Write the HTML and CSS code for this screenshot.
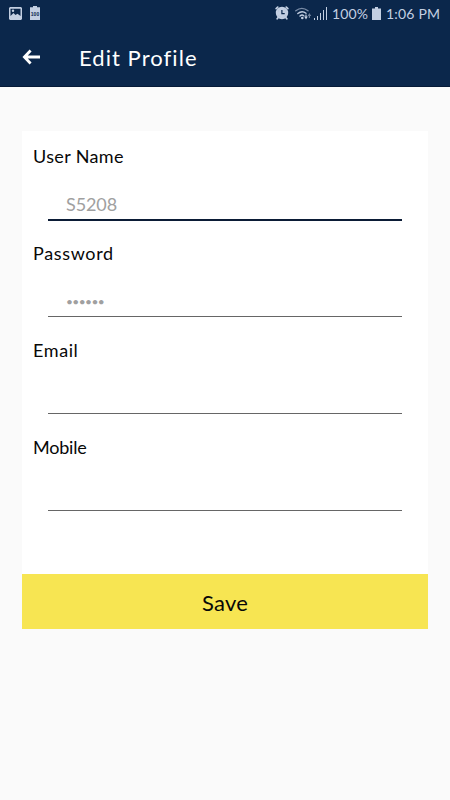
FILE: index.html
```html
<!DOCTYPE html>
<html lang="en">
<head>
  <meta charset="utf-8">
  <meta name="viewport" content="width=device-width, initial-scale=1">
  <title>Edit Profile</title>
  <link rel="stylesheet" href="styles.css">
</head>
<body>
  <header>
    <div class="status-bar">
      <div class="status-left">
        <svg width="13" height="13" viewBox="0 0 13 13">
          <path fill="#c3cfe2" fill-rule="evenodd" d="M1 0h11l1 1v11l-1 1H1l-1-1V1zM1.5 1.7V9l3-3 2 2 2-1.3 3 2.3V1.7z"/>
          <circle cx="4" cy="3.7" r="1.2" fill="#c3cfe2"/>
        </svg>
        <svg width="10" height="14" viewBox="0 0 10 14">
          <path fill="#c3cfe2" d="M3 0h4v1.3h3V14H0V1.3h3z"/>
          <text class="battery-level" x="5" y="9.8" text-anchor="middle" textLength="8.4" lengthAdjust="spacingAndGlyphs">100</text>
        </svg>
      </div>
      <div class="status-right">
        <svg width="14" height="14" viewBox="0 0 14 14">
          <circle cx="7" cy="7" r="5" fill="none" stroke="#c3cfe2" stroke-width="2.4"/>
          <circle cx="7" cy="7" r="4.4" fill="#c3cfe2"/>
          <path fill="none" stroke="#c3cfe2" stroke-width="1.8" stroke-linecap="round" d="M1.2 2.6l1.5-1.4M12.8 2.6l-1.5-1.4M3 11.8l-.8 1M11 11.8l.8 1"/>
          <path fill="none" stroke="#0b274b" stroke-width="1.2" d="M6.9 4v3.6h2.8"/>
        </svg>
        <svg class="wifi" width="17" height="13" viewBox="0 0 17 13">
          <g fill="none" stroke="#c3cfe2" stroke-width="1.4" stroke-linecap="round">
            <path opacity=".6" d="M.8 3.8Q6.8-1 13 3.8"/>
            <path d="M2.8 6.5Q7 3 11 6.2M5 9Q7 7.3 8.8 8.7"/>
          </g>
          <circle cx="7.3" cy="11" r="1.3" fill="#c3cfe2"/>
          <path fill="#c3cfe2" d="M9.2 9.5h1.2V7.5h1.2v2h1.2L11 12.5z"/>
          <path fill="#71839f" d="M12.6 9l1.8-3 1.8 3h-1.2v2h-1.2V9z"/>
        </svg>
        <svg class="signal" width="13" height="13" viewBox="0 0 13 13">
          <path fill="#c3cfe2" d="M0 11h1v2H0zM3 9h1v4H3zM6 6h1v7H6zM9 3h1v10H9zM12 0h1v13h-1z"/>
        </svg>
        <span class="percent">100%</span>
        <svg class="battery" width="9" height="13" viewBox="0 0 9 13">
          <path fill="#c3cfe2" d="M3 0h3v1.5h3V13H0V1.5h3z"/>
        </svg>
        <span class="time">1:06 PM</span>
      </div>
    </div>
    <div class="toolbar">
      <svg class="back" width="18" height="16" viewBox="0 0 18 16">
        <path fill="none" stroke="#fff" stroke-width="2.8" d="M8.6 1.5L2.4 8l6.2 6.5M2.8 8H18"/>
      </svg>
      <h1>Edit Profile</h1>
    </div>
  </header>

  <form class="profile">
    <div class="fields">
      <div class="field active">
        <label class="label-username" for="username">User Name</label>
        <input class="username" type="text" id="username" value="S5208">
      </div>
      <div class="field">
        <label class="label-password" for="password">Password</label>
        <input class="password" type="text" id="password" value="••••••">
      </div>
      <div class="field">
        <label class="label-email" for="email">Email</label>
        <input type="text" id="email">
      </div>
      <div class="field">
        <label class="label-mobile" for="mobile">Mobile</label>
        <input type="text" id="mobile">
      </div>
    </div>
    <button type="button">Save</button>
  </form>
</body>
</html>
```

FILE: styles.css
```css
* {
  box-sizing: border-box;
}

body {
  margin: 0;
  min-height: 800px;
  background-color: #fafafa;
  color: #080808;
  font-family: Lato, "Open Sans", sans-serif;
}

svg {
  display: block;
  flex: none;
}

header {
  height: 87px;
  background-color: #0b274b;
  border-bottom: 1px solid #061a37;
}

.status-bar {
  display: flex;
  justify-content: space-between;
  height: 28px;
  padding: 0 10px 0 9px;
  color: #c3cfe2;
  font-size: 14px;
}

.status-left,
.status-right {
  display: flex;
  align-items: center;
  padding-bottom: 2px;
}

.status-left {
  gap: 8px;
}

.battery-level {
  font-family: "Liberation Sans", sans-serif;
  font-size: 6px;
  font-weight: bold;
  fill: #0b274b;
}

.wifi {
  margin-left: 6px;
}

.signal {
  margin-left: 2px;
}

.percent {
  margin-left: 5px;
  width: 36px;
  letter-spacing: 0.1px;
}

.battery {
  margin-left: 4px;
}

.time {
  margin-left: 5px;
  width: 54px;
  letter-spacing: 0.2px;
  white-space: nowrap;
}

.toolbar {
  display: flex;
  align-items: center;
  height: 58px;
  padding-left: 22px;
}

h1 {
  margin: 2px 0 0 39px;
  color: #fff;
  font-size: 22px;
  font-weight: normal;
  line-height: 28px;
  letter-spacing: 1.05px;
}

.profile {
  margin: 44px 22px 0;
}

.fields {
  height: 443px;
  padding: 14px 11px 0;
  background-color: #fff;
}

.field {
  height: 97px;
}

label {
  display: block;
  height: 22px;
  font-size: 18px;
  line-height: 22px;
}

.label-username {
  letter-spacing: 0.35px;
}

.label-password {
  letter-spacing: 0.65px;
}

.label-email {
  letter-spacing: 0.6px;
}

.label-mobile {
  letter-spacing: -0.2px;
}

input {
  display: block;
  width: 354px;
  height: 31px;
  margin: 22px 0 0 15px;
  padding: 0 18px;
  border: none;
  border-bottom: 1px solid #666;
  border-radius: 0;
  outline: none;
  background: transparent;
  color: #a0a0a0;
  font-family: inherit;
  font-size: 18px;
}

.active input {
  height: 32px;
  border-bottom: 2px solid #0b1c36;
}

.username {
  letter-spacing: -0.1px;
}

.password {
  font-size: 12px;
  letter-spacing: -0.6px;
}

button {
  display: block;
  width: 100%;
  height: 55px;
  padding: 1px 0 0;
  border: none;
  border-radius: 0;
  background-color: #f7e552;
  color: #080808;
  font-family: inherit;
  font-size: 22px;
  letter-spacing: 0.2px;
  cursor: pointer;
}
```
